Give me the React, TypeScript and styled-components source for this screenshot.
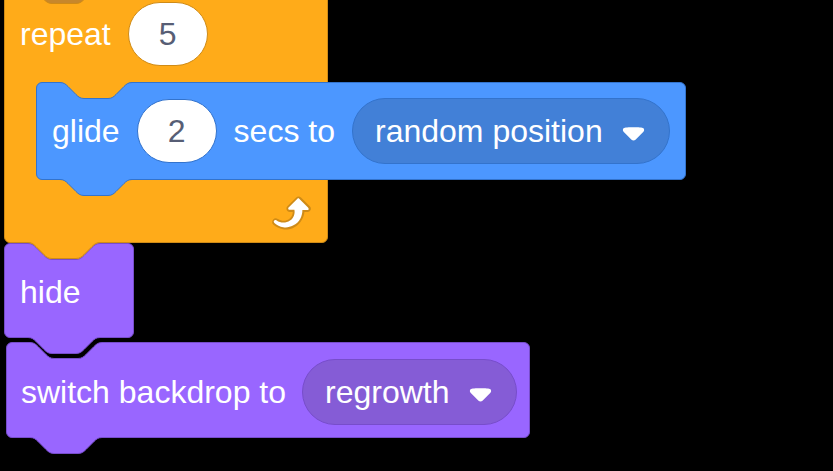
import React from 'react';
import styled, { createGlobalStyle } from 'styled-components';

type Palette = { fill: string; border: string; field: string };

const CONTROL: Palette = { fill: '#FFAB19', border: '#CF8B17', field: '#FFAB19' };
const MOTION: Palette = { fill: '#4C97FF', border: '#3373CC', field: '#4280D7' };
const LOOKS: Palette = { fill: '#9966FF', border: '#774DCB', field: '#855CD6' };

// scratch notch curve, scaled x2
const CURVE = 'c4,0 6,2 8,4 l8,8 c2,2 4,4 8,4 h24 c4,0 6,-2 8,-4 l8,-8 c2,-2 4,-4 8,-4';

const GlobalStyle = createGlobalStyle`
  html, body {
    margin: 0;
    padding: 0;
    background: #000;
  }
  body {
    font-family: "Liberation Sans", Arial, sans-serif;
    overflow: hidden;
  }
`;

const Canvas = styled.div`
  display: flex;
  flex-direction: column;
  align-items: flex-start;
  padding-left: 4px;
  height: 471px;
  overflow: hidden;
`;

const Block = styled.div<{ $c: Palette; $h: number; $shift?: number; $gap?: number; $minW?: number }>`
  position: relative;
  box-sizing: border-box;
  width: max-content;
  min-width: ${(p) => p.$minW ?? 0}px;
  height: ${(p) => p.$h}px;
  display: flex;
  align-items: center;
  gap: ${(p) => p.$gap ?? 16}px;
  padding: ${(p) => p.$shift ?? 0}px 15px 0 15px;
  background: ${(p) => p.$c.fill};
  border: 1px solid ${(p) => p.$c.border};
  border-radius: 6px;
  color: #fff;
  font-size: 32px;
  white-space: nowrap;
`;

const Detached = styled(Block)`
  margin: 4px 0 0 2px;
  padding-left: 14px;
  padding-right: 12px;
`;

const Label = styled.span`
  line-height: 1;
`;

const NumberInput = styled.div<{ $border: string }>`
  box-sizing: border-box;
  width: 80px;
  height: 64px;
  border-radius: 32px;
  background: #fff;
  border: 1px solid ${(p) => p.$border};
  display: flex;
  align-items: center;
  justify-content: center;
  color: #575e75;
  font-size: 32px;
  line-height: 1;
`;

const Dropdown = styled.div<{ $c: Palette }>`
  box-sizing: border-box;
  height: 66px;
  border-radius: 33px;
  display: flex;
  align-items: center;
  gap: 18px;
  padding: 0 23px 0 22px;
  background: ${(p) => p.$c.field};
  border: 1px solid ${(p) => p.$c.border};
`;

const Arrow = styled.svg`
  margin-top: 6px;
`;

const CBlock = styled.div`
  position: relative;
  box-sizing: border-box;
  width: 324px;
  margin-top: -13px;
  display: flex;
  flex-direction: column;
  align-items: flex-start;
  background: ${CONTROL.fill};
  border: 1px solid ${CONTROL.border};
  border-radius: 6px;
`;

const CTop = styled.div`
  box-sizing: border-box;
  height: 94px;
  padding: 0 0 2px 15px;
  display: flex;
  align-items: center;
  gap: 17px;
  color: #fff;
  font-size: 32px;
`;

const Mouth = styled.div`
  width: max-content;
  padding-left: 31px;
`;

const CBottom = styled.div`
  box-sizing: border-box;
  align-self: stretch;
  height: 62px;
  display: flex;
  justify-content: flex-end;
  align-items: flex-start;
  padding: 8px 15px 0 0;
`;

const NotchSvg = styled.svg`
  position: absolute;
  top: -1px;
  left: 23px;
  z-index: 1;
  overflow: visible;
`;

const TabSvg = styled.svg`
  position: absolute;
  top: 100%;
  left: 23px;
  z-index: 3;
  overflow: visible;
`;

const Notch = ({ fill, stroke }: { fill: string; stroke: string }) => (
  <NotchSvg width="72" height="18" viewBox="0 0 72 18">
    <path d={`M0,0 L0,0.5 ${CURVE} L72,0 Z`} fill={fill} />
    <path d={`M0,0.5 ${CURVE}`} fill="none" stroke={stroke} strokeWidth="1" />
  </NotchSvg>
);

const Tab = ({ c }: { c: Palette }) => (
  <TabSvg width="72" height="18" viewBox="0 0 72 18">
    <path d={`M0,0 L0,0.5 ${CURVE} L72,0 Z`} fill={c.fill} />
    <path d={`M0,0.5 ${CURVE}`} fill="none" stroke={c.border} strokeWidth="1" />
  </TabSvg>
);

const DropArrow = () => (
  <Arrow width="25" height="17.6" viewBox="0 0 12.71 8.79">
    <path
      d="M6.36,7.79a1.43,1.43,0,0,1-1-.42L1.42,3.45a1.44,1.44,0,0,1,0-2c0.56-.56,9.31-.56,9.87,0a1.44,1.44,0,0,1,0,2L7.37,7.37A1.43,1.43,0,0,1,6.36,7.790Z"
      fill="#fff"
    />
  </Arrow>
);

const LoopIcon = () => (
  <svg width="48" height="48" viewBox="0 0 24 24">
    <path
      d="M23.3,11c-0.3,0.6-0.9,1-1.5,1h-1.6c-0.1,1.3-0.5,2.5-1.1,3.6c-0.9,1.7-2.3,3.2-4.1,4.1c-1.7,0.9-3.6,1.2-5.5,0.9c-1.8-0.3-3.5-1.1-4.9-2.3c-0.7-0.7-0.7-1.9,0-2.6c0.6-0.6,1.6-0.7,2.3-0.2H7c0.9,0.6,1.9,0.9,2.9,0.9s1.9-0.3,2.7-0.9c1.1-0.8,1.8-2.1,1.8-3.5h-1.5c-0.9,0-1.7-0.7-1.7-1.7c0-0.4,0.2-0.9,0.5-1.2l4.4-4.4c0.7-0.6,1.7-0.6,2.4,0L23,9.2C23.5,9.7,23.6,10.4,23.3,11z"
      fill="#CF8B17"
    />
    <path
      d="M21.8,11h-2.6c0,1.5-0.3,2.9-1,4.2c-0.8,1.6-2.1,2.8-3.7,3.6c-1.5,0.8-3.3,1.1-4.9,0.8c-1.6-0.2-3.2-1-4.4-2.1c-0.4-0.3-0.4-0.9-0.1-1.2c0.3-0.4,0.9-0.4,1.2-0.1l0,0c1,0.7,2.2,1.1,3.4,1.1s2.3-0.3,3.3-1c0.9-0.6,1.6-1.5,2-2.6c0.3-0.9,0.4-1.8,0.2-2.8h-2.4c-0.4,0-0.7-0.3-0.7-0.7c0-0.2,0.1-0.3,0.2-0.4l4.4-4.4c0.3-0.3,0.7-0.3,0.9,0L22,9.8c0.3,0.3,0.4,0.6,0.3,0.9S22,11,21.8,11z"
      fill="#fff"
    />
  </svg>
);

const App = () => {
  return (
    <>
      <GlobalStyle />
      <Canvas>
        <CBlock>
          <Notch fill="#C7872B" stroke={CONTROL.border} />
          <CTop>
            <Label>repeat</Label>
            <NumberInput $border={CONTROL.border}>5</NumberInput>
          </CTop>
          <Mouth>
            <Block $c={MOTION} $h={98} $gap={17}>
              <Notch fill={CONTROL.fill} stroke={MOTION.border} />
              <Label>glide</Label>
              <NumberInput $border={MOTION.border}>2</NumberInput>
              <Label>secs to</Label>
              <Dropdown $c={MOTION}>
                <Label>random position</Label>
                <DropArrow />
              </Dropdown>
              <Tab c={MOTION} />
            </Block>
          </Mouth>
          <CBottom>
            <LoopIcon />
          </CBottom>
          <Tab c={CONTROL} />
        </CBlock>

        <Block $c={LOOKS} $h={95} $shift={3} $minW={130}>
          <Notch fill={CONTROL.fill} stroke={LOOKS.border} />
          <Label>hide</Label>
          <Tab c={LOOKS} />
        </Block>

        <Detached $c={LOOKS} $h={96} $shift={3}>
          <Notch fill="#000" stroke={LOOKS.border} />
          <Label>switch backdrop to</Label>
          <Dropdown $c={LOOKS}>
            <Label>regrowth</Label>
            <DropArrow />
          </Dropdown>
          <Tab c={LOOKS} />
        </Detached>
      </Canvas>
    </>
  );
};

export default App;
